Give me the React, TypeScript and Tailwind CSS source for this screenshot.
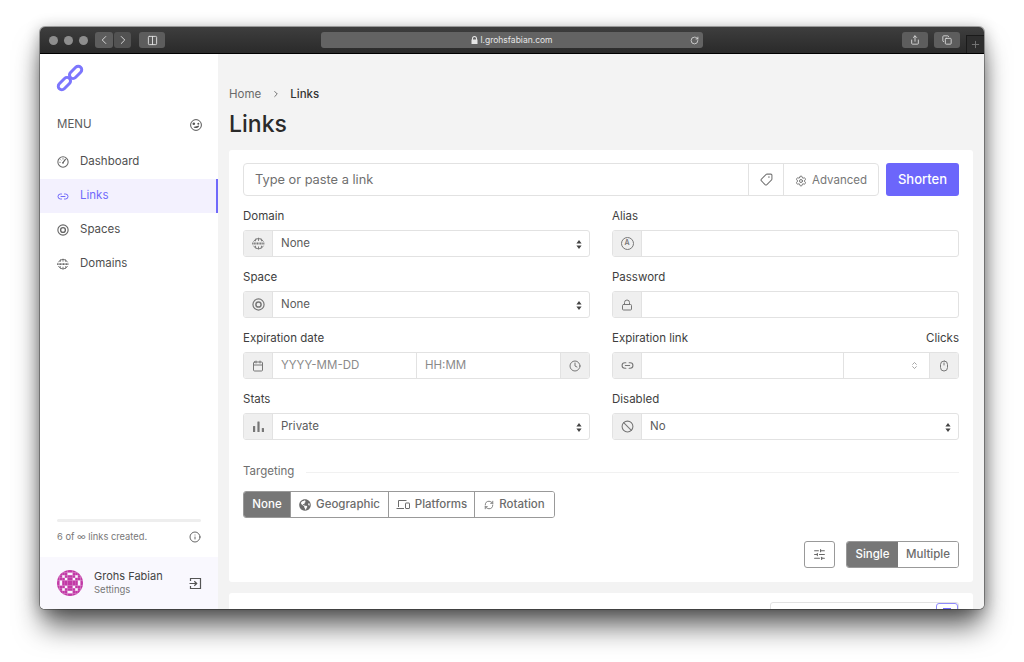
import { ChevronLeft, ChevronRight, ChevronsUpDown, Columns2, RotateCw, Share, Copy, Plus, Lock, Tag, Settings, Link2, Calendar, Clock, Ban, Mouse, Info, RefreshCw, SlidersHorizontal } from "lucide-react";
import { FaGlobeAmericas } from "react-icons/fa";
import type { ReactNode } from "react";

const font = "font-['Inter','Liberation_Sans',sans-serif]";

function Target({ size = 14 }: { size?: number }) {
  return (
    <svg width={size} height={size} viewBox="0 0 14 14" fill="none" stroke="currentColor">
      <circle cx="7" cy="7" r="6" strokeWidth="1.3" />
      <circle cx="7" cy="7" r="2.8" strokeWidth="1.6" />
    </svg>
  );
}

// globe with the dashed www band across the middle
function Www({ size = 14 }: { size?: number }) {
  return (
    <svg width={size} height={size} viewBox="0 0 14 14" fill="none" stroke="currentColor" strokeWidth="1">
      <path d="M1.6 5a6 6 0 0 1 10.8 0M1.6 9.4a6 6 0 0 0 10.8 0M7 .8v3.4M7 10.2v3M4.4 1.6C3.9 2.6 3.7 3.6 3.7 4.6M9.6 1.6c.5 1 .7 2 .7 3M4.4 12.4c-.5-1-.7-2-.7-3M9.6 12.4c.5-1 .7-2 .7-3" />
      <path d="M.2 7.1h13.6" strokeWidth="2.2" strokeDasharray="1.2 .5" />
    </svg>
  );
}

function GaugeIcon({ size = 13 }: { size?: number }) {
  return (
    <svg width={size} height={size} viewBox="0 0 14 14" fill="none" stroke="currentColor" strokeWidth="1.2" strokeLinecap="round">
      <circle cx="7" cy="7" r="6" />
      <path d="M7 7.8 9.8 4" strokeWidth="1.4" />
      <path d="M3.2 7.4h.6M4.3 4.4l.4.4M7 3v.6" strokeWidth="1" />
      <circle cx="7" cy="8" r="1" fill="currentColor" stroke="none" />
    </svg>
  );
}

function FaceIcon() {
  return (
    <svg width="12" height="12" viewBox="0 0 12 12" fill="none" stroke="#555" strokeWidth="1">
      <circle cx="6" cy="6" r="5.4" />
      <circle cx="3.8" cy="4.8" r="1.3" fill="#555" stroke="none" />
      <circle cx="8.3" cy="4.8" r="1" fill="#555" stroke="none" />
      <path d="M3.4 8c1 .9 1.6 1.1 2.6 1.1S8 8.6 9 7.4l-.1-.9c-1.5.6-3.5 1-5.5 1.5z" fill="#555" stroke="none" />
    </svg>
  );
}

function BarsIcon() {
  return (
    <svg width="13" height="13" viewBox="0 0 13 13" fill="currentColor">
      <rect x="1" y="6" width="2.2" height="6" rx=".5" />
      <rect x="5.4" y="1.5" width="2.2" height="10.5" rx=".5" />
      <rect x="9.8" y="8" width="2.2" height="4" rx=".5" />
    </svg>
  );
}

function SignIn() {
  return (
    <svg width="13" height="13" viewBox="0 0 13 13" fill="none" stroke="#555" strokeWidth="1.2">
      <path d="M1.5 4V1.5h10v10h-10V9M.5 6.5h7M5.3 4.2l2.4 2.3-2.4 2.3" />
    </svg>
  );
}

function Devices() {
  return (
    <svg width="14" height="11" viewBox="0 0 14 11" fill="none" stroke="currentColor" strokeWidth="1">
      <path d="M2.5 8V1.5h8M.5 9.5h7.5" />
      <rect x="9.5" y="4" width="4" height="5.5" rx=".5" />
    </svg>
  );
}

function Logo() {
  return (
    <svg width="28" height="28" viewBox="0 0 28 28" fill="none" stroke="#7c76fd" strokeWidth="3">
      <rect x="-7.2" y="-3.5" width="14.4" height="7" rx="3.5" transform="translate(8.4 19.6) rotate(-45)" />
      <rect x="-7.2" y="-3.5" width="14.4" height="7" rx="3.5" transform="translate(19.6 8.4) rotate(-45)" />
    </svg>
  );
}

function Avatar() {
  const cells = [
    "0011111100", "0111001110", "1101111011", "1110110111", "1011111101",
    "1011111101", "1110110111", "1101111011", "0111001110", "0011111100",
  ];
  return (
    <svg width="26" height="26" viewBox="0 0 20 20" className="shrink-0">
      <clipPath id="av"><circle cx="10" cy="10" r="10" /></clipPath>
      <g clipPath="url(#av)">
        {cells.map((row, y) =>
          row.split("").map((c, x) =>
            c === "1" ? <rect key={x + "-" + y} x={x * 2} y={y * 2} width="2" height="2" fill="#c23aa6" /> : null
          )
        )}
      </g>
    </svg>
  );
}

function ChromeBtn({ children, className = "w-[26px]" }: { children: ReactNode; className?: string }) {
  return <div className={"h-[16px] rounded-[3px] bg-[#5d5d5d] flex items-center justify-center text-[#e3e3e3] " + className}>{children}</div>;
}

function NavItem({ icon, label, active }: { icon: ReactNode; label: string; active?: boolean }) {
  return (
    <div className={"h-[34px] pl-[17px] flex items-center gap-[11px] text-[11.5px] " + (active ? "bg-[#f3f1fe] text-[#7069fb] border-r-2 border-[#7069fb]" : "text-[#4f4f4f]")}>
      <span className={"w-[12px] flex justify-center " + (active ? "text-[#7069fb]" : "text-[#666]")}>{icon}</span>
      {label}
    </div>
  );
}

function Addon({ children, side = "left" }: { children: ReactNode; side?: "left" | "right" }) {
  return (
    <div className={"w-[29px] shrink-0 bg-[#efefef] flex items-center justify-center text-[#777] " + (side === "left" ? "border-r border-[#e2e2e2]" : "border-l border-[#e2e2e2]")}>
      {children}
    </div>
  );
}

function Field({ label, right, children }: { label: string; right?: string; children: ReactNode }) {
  return (
    <div className="h-[61px]">
      <div className="h-[14px] mb-[7px] flex justify-between items-center text-[11.5px] leading-[14px] text-[#3e3e3e]">
        <span>{label}</span>
        {right && <span>{right}</span>}
      </div>
      <div className="h-[27px] flex rounded-[3px] border border-[#e2e2e2] bg-white overflow-hidden text-[11.5px] text-[#5c5c5c]">
        {children}
      </div>
    </div>
  );
}

function SelectBody({ value }: { value: string }) {
  return (
    <div className="flex-1 flex items-center justify-between pl-[8px] pr-[7px] pt-px">
      <span>{value}</span>
      <svg width="6" height="9" viewBox="0 0 6 9" fill="#444">
        <path d="M3 0l2.6 3.4H.4zM3 9L.4 5.6h5.2z" />
      </svg>
    </div>
  );
}

function Segment({ children, active, className = "" }: { children: ReactNode; active?: boolean; className?: string }) {
  return (
    <div className={"h-full flex items-center justify-center gap-[5px] text-[11.5px] font-medium " + (active ? "bg-[#777] text-white " : "bg-white text-[#6c6c6c] ") + className}>
      {children}
    </div>
  );
}

export default function App() {
  return (
    <div className={"w-[1024px] h-[662px] bg-white overflow-hidden pt-[27px] px-[40px] " + font}>
      <div className="h-[582px] rounded-[5px] overflow-hidden flex flex-col ring-1 ring-black/30 shadow-[0_20px_28px_-3px_rgba(0,0,0,0.62),0_2px_16px_rgba(0,0,0,0.32)]">
        {/* title bar */}
        <div className="h-[27px] shrink-0 bg-gradient-to-b from-[#3e3e3e] to-[#2a2a2a] border-b border-black flex items-center pl-[9px] pr-[8px] relative">
          <div className="flex gap-[6px]">
            <span className="w-[9px] h-[9px] rounded-full bg-[#8e8e8e]" />
            <span className="w-[9px] h-[9px] rounded-full bg-[#8e8e8e]" />
            <span className="w-[9px] h-[9px] rounded-full bg-[#8e8e8e]" />
          </div>
          <div className="flex gap-[1px] ml-[7px]">
            <ChromeBtn className="w-[18px]"><ChevronLeft size={14} strokeWidth={1.5} /></ChromeBtn>
            <ChromeBtn className="w-[17px] bg-[#525252] text-[#858585]"><ChevronRight size={14} strokeWidth={1.5} /></ChromeBtn>
          </div>
          <ChromeBtn className="w-[26px] ml-[8px]"><Columns2 size={11} /></ChromeBtn>
          <div className="ml-[156px] w-[382px] h-[16px] rounded-[3px] bg-[#636363] flex items-center justify-center text-[8.5px] text-[#e6e6e6] relative">
            <svg width="7" height="8" viewBox="0 0 7 8" fill="#e6e6e6" className="mr-[2px]">
              <path d="M1 3.5V2.500a2.500 2.500 0 0 1 5 0v1h.5V8H.5V3.500zm1 0h3V2.500a1.500 1.500 0 0 0-3 0z" />
            </svg>
            l.grohsfabian.com
            <RotateCw size={9} className="absolute right-[4px]" />
          </div>
          <ChromeBtn className="w-[26px] ml-[199px]"><Share size={10} /></ChromeBtn>
          <ChromeBtn className="w-[26px] ml-[6px]"><Copy size={10} /></ChromeBtn>
          <div className="absolute right-0 bottom-0 w-[18px] h-[18px] bg-[#2e2e2e] border-l border-t border-[#1a1a1a] flex items-center justify-center text-[#777]">
            <Plus size={11} />
          </div>
        </div>

        <div className="flex-1 min-h-0 flex bg-[#f3f3f3]">
          {/* sidebar */}
          <aside className="w-[178px] shrink-0 bg-white flex flex-col">
            <div className="h-[55px] pl-[16px] pt-[10px]"><Logo /></div>
            <div className="h-[30px] pl-[17px] pr-[16px] pt-[2px] flex items-center justify-between text-[11.5px] text-[#5c5c5c]">
              MENU
              <FaceIcon />
            </div>
            <nav className="mt-[6px]">
              <NavItem icon={<GaugeIcon size={12} />} label="Dashboard" />
              <NavItem icon={<Link2 size={13} />} label="Links" active />
              <NavItem icon={<Target size={12} />} label="Spaces" />
              <NavItem icon={<Www size={12} />} label="Domains" />
            </nav>
            <div className="mt-auto px-[17px] pb-[13px]">
              <div className="h-[3px] rounded-full bg-[#eeeeee] mb-[8px]" />
              <div className="flex items-center justify-between text-[9.3px] text-[#777]">
                6 of ∞ links created.
                <Info size={12} className="text-[#666]" />
              </div>
            </div>
            <div className="h-[52px] bg-[#f9f8fe] pl-[17px] pr-[16px] flex items-center gap-[11px]">
              <Avatar />
              <div className="flex-1">
                <div className="text-[11px] leading-[14px] text-[#444]">Grohs Fabian</div>
                <div className="text-[9.5px] leading-[14px] text-[#777]">Settings</div>
              </div>
              <SignIn />
            </div>
          </aside>

          {/* main */}
          <main className="flex-1 min-w-0 px-[11px] overflow-hidden">
            <div className="pt-[33px] h-[96px]">
              <div className="flex items-center text-[11.5px] leading-[14px] text-[#6a6a6a]">
                Home
                <ChevronRight size={10} className="ml-[10px] mr-[9px] text-[#555]" />
                <span className="text-[#333] font-medium">Links</span>
              </div>
              <h1 className="text-[23px] leading-[30px] mt-[8px] font-medium text-[#2a2a2a]">Links</h1>
            </div>

            <section className="h-[432px] bg-white rounded-[3px] px-[14px] pt-[13px]">
              <div className="flex gap-[7px] h-[33px]">
                <div className="flex-1 flex rounded-[4px] border border-[#e2e2e2] text-[#777]">
                  <div className="flex-1 flex items-center pl-[11px] text-[12.8px] text-[#6f6f6f]">Type or paste a link</div>
                  <div className="w-[35px] border-l border-[#e2e2e2] flex items-center justify-center"><Tag size={13} className="rotate-90" /></div>
                  <div className="w-[95px] border-l border-[#e2e2e2] flex items-center justify-center gap-[5px] text-[11.5px] pt-[2px]"><Settings size={12} />Advanced</div>
                </div>
                <div className="w-[73px] rounded-[3px] bg-[#6c66fb] text-white text-[13px] font-medium flex items-center justify-center">Shorten</div>
              </div>

              <div className="grid grid-cols-2 gap-x-[22px] mt-[13px]">
                <Field label="Domain"><Addon><Www size={13} /></Addon><SelectBody value="None" /></Field>
                <Field label="Alias"><Addon><span className="w-[13px] h-[13px] rounded-full border border-[#777] flex items-center justify-center text-[7px] font-semibold">A</span></Addon><div className="flex-1" /></Field>
                <Field label="Space"><Addon><Target size={13} /></Addon><SelectBody value="None" /></Field>
                <Field label="Password"><Addon><Lock size={12} /></Addon><div className="flex-1" /></Field>
                <Field label="Expiration date">
                  <Addon><Calendar size={12} /></Addon>
                  <div className="w-[144px] border-r border-[#e2e2e2] flex items-center pl-[8px] pt-px text-[#8a8a8a]">YYYY-MM-DD</div>
                  <div className="flex-1 flex items-center pl-[8px] pt-px text-[#8a8a8a]">HH:MM</div>
                  <Addon side="right"><Clock size={12} /></Addon>
                </Field>
                <Field label="Expiration link" right="Clicks">
                  <Addon><Link2 size={13} /></Addon>
                  <div className="flex-1 border-r border-[#e2e2e2]" />
                  <div className="w-[85px] flex items-center justify-end pr-[10px]"><ChevronsUpDown size={9} className="text-[#888]" /></div>
                  <Addon side="right"><Mouse size={12} /></Addon>
                </Field>
                <Field label="Stats"><Addon><BarsIcon /></Addon><SelectBody value="Private" /></Field>
                <Field label="Disabled"><Addon><Ban size={13} /></Addon><SelectBody value="No" /></Field>
              </div>

              <div className="flex items-center gap-[12px] mt-[12px] h-[14px]">
                <span className="text-[11.5px] text-[#6f6f6f]">Targeting</span>
                <div className="flex-1 h-px bg-[#f1f1f1]" />
              </div>

              <div className="mt-[12px] inline-flex h-[27px] rounded-[3px] border border-[#999] overflow-hidden">
                <Segment active className="w-[46px]">None</Segment>
                <Segment className="w-[98px] border-l border-[#999]"><FaGlobeAmericas size={12} />Geographic</Segment>
                <Segment className="w-[86px] border-l border-[#999]"><Devices />Platforms</Segment>
                <Segment className="w-[80px] border-l border-[#999]"><RefreshCw size={10} />Rotation</Segment>
              </div>

              <div className="flex justify-end gap-[11px] mt-[23px] h-[27px]">
                <div className="w-[31px] rounded-[3px] border border-[#999] flex items-center justify-center text-[#666]"><SlidersHorizontal size={13} /></div>
                <div className="flex rounded-[3px] border border-[#999] overflow-hidden">
                  <Segment active className="w-[51px]">Single</Segment>
                  <Segment className="w-[60px]">Multiple</Segment>
                </div>
              </div>
            </section>

            <section className="mt-[11px] h-[60px] bg-white rounded-[3px] px-[14px] pt-[9px] flex justify-between">
              <span className="text-[12px] leading-[14px] mt-[6px] text-[#555]">All</span>
              <div className="w-[189px] h-[30px] flex rounded-[3px] border border-[#e2e2e2]">
                <div className="flex-1" />
                <div className="w-[22px] rounded-[3px] border border-[#8f8afc] flex justify-center pt-[3px]"><span className="w-[8px] h-[1px] mt-[1px] bg-[#7069fb]" /></div>
              </div>
            </section>
          </main>
        </div>
      </div>
    </div>
  );
}
